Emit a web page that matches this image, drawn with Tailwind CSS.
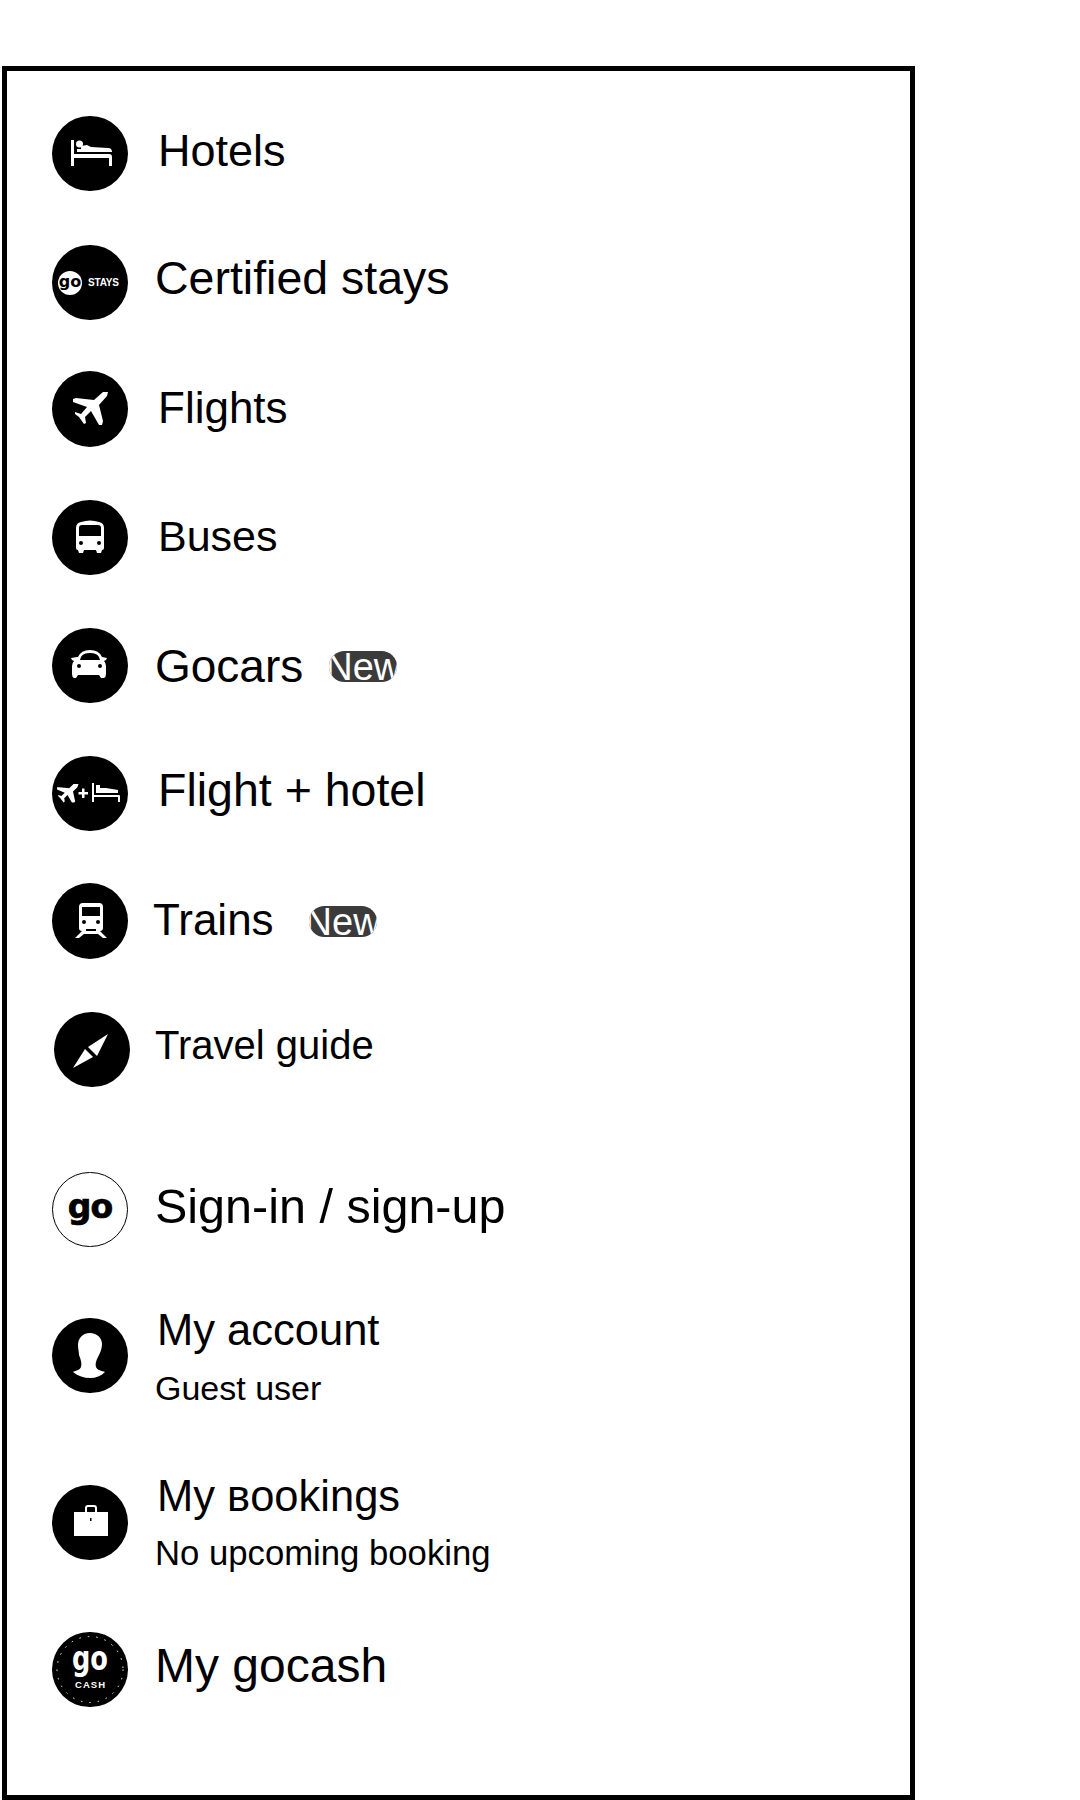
<!DOCTYPE html>
<html lang="en">
<head>
  <meta charset="UTF-8" />
  <meta name="viewport" content="width=device-width, initial-scale=1.0" />
  <title>Menu</title>
  <script src="https://cdn.jsdelivr.net/npm/@tailwindcss/browser@4"></script>
</head>
<body class="bg-white h-[1800px] overflow-hidden font-['Liberation_Sans',Arial,sans-serif] text-black">

  <!-- Side menu frame -->
  <div class="ml-[2px] mt-[66px] w-[913px] h-[1734px] border-[5px] border-black pl-[45px] pt-[45px] box-border">

    <!-- Hotels -->
    <a class="flex items-center h-[75px]">
      <span class="block w-[76px] h-[75px] rounded-full bg-black shrink-0">
        <svg viewBox="0 0 76 75" class="w-[76px] h-[75px]" fill="#fff">
          <path d="M19 24h3v14h35a3 3 0 0 1 3 3v9h-3v-8H22v8h-3z"/>
          <circle cx="27.5" cy="28" r="3.5"/>
          <path d="M25 36v-3h4v-3l6-1 4 2 17 1a4 4 0 0 1 4 4v0H25z"/>
        </svg>
      </span>
      <span class="ml-[30px] mb-[5px] text-[45px]">Hotels</span>
    </a>

    <!-- Certified stays -->
    <a class="flex items-center h-[75px] mt-[54px]">
      <span class="block w-[76px] h-[75px] rounded-full bg-black shrink-0">
        <svg viewBox="0 0 76 75" class="w-[76px] h-[75px]" fill="#fff">
          <circle cx="18" cy="38" r="12"/>
          <text x="18" y="42" text-anchor="middle" font-size="16" font-weight="700" fill="#000" class="font-['DejaVu_Sans']">go</text>
          <text x="36" y="41" font-size="10" font-weight="700" textLength="31" class="font-['Liberation_Sans']">STAYS</text>
        </svg>
      </span>
      <span class="ml-[27px] mb-[8px] text-[46.5px]">Certified stays</span>
    </a>

    <!-- Flights -->
    <a class="flex items-center h-[76px] mt-[51px]">
      <span class="block w-[76px] h-[76px] rounded-full bg-black shrink-0">
        <svg viewBox="0 0 76 76" class="w-[76px] h-[76px]" fill="#fff">
          <path d="M56 21l-1 4-8 9 4 16-1 4h-3L39 40l-6 6 1 6-2 1-5-7-4-3v-2l6 2 6-7-14-5v-3l3-1 18 2 9-8z"/>
        </svg>
      </span>
      <span class="ml-[30px] mb-[3px] text-[44px]">Flights</span>
    </a>

    <!-- Buses -->
    <a class="flex items-center h-[75px] mt-[53px]">
      <span class="block w-[76px] h-[75px] rounded-full bg-black shrink-0">
        <svg viewBox="0 0 76 75" class="w-[76px] h-[75px]" fill="#fff">
          <path fill-rule="evenodd" d="M24 28q0-5 5-6 9-3 18 0 5 1 5 6v20q0 2-2 2l-1 3h-4l-1-3H32l-1 3h-4l-1-3q-2 0-2-2zM27 28v8h22v-8q0-3-3-3H30q-3 0-3 3zM29 41a2 2 0 1 0 0 4 2 2 0 1 0 0-4zM47 41a2 2 0 1 0 0 4 2 2 0 1 0 0-4z"/>
        </svg>
      </span>
      <span class="ml-[30px] mb-[2px] text-[43px]">Buses</span>
    </a>

    <!-- Gocars -->
    <a class="flex items-center h-[75px] mt-[53px]">
      <span class="block w-[76px] h-[75px] rounded-full bg-black shrink-0">
        <svg viewBox="0 0 76 75" class="w-[76px] h-[75px]" fill="#fff">
          <path fill-rule="evenodd" d="M26 29q3-7 12-7t12 7l5 1-1 2-2 1q2 2 2 5v8q0 3-2 4h-3l-2-3H26l-2 3h-2q-2-1-2-4v-8q0-3 2-5l-2-1-1-2 6-1zM29 29q2-4 9-4t9 4l1 3H28zM27 36a2 2 0 1 0 0 4 2 2 0 1 0 0-4zM48 36a2 2 0 1 0 0 4 2 2 0 1 0 0-4z"/>
        </svg>
      </span>
      <span class="ml-[27px] mt-[1px] text-[46px]">Gocars</span>
      <span class="block ml-[26px] mt-[2px] w-[68px] h-[31px] rounded-full bg-[#3b3b3b] overflow-hidden text-white text-[38px] leading-[33px] flex justify-center shrink-0"><span class="shrink-0">New</span></span>
    </a>

    <!-- Flight + hotel -->
    <a class="flex items-center h-[75px] mt-[53px]">
      <span class="block w-[76px] h-[75px] rounded-full bg-black shrink-0">
        <svg viewBox="0 0 76 75" class="w-[76px] h-[75px]" fill="#fff">
          <g transform="translate(-1 -4) scale(1.1)">
            <path d="M25 29l-1 3-4 4 2 9-1 1h-2l-4-7-3 3 .5 3-1 1-3-4-2-2v-1l3 1 3-3-7-3v-2h2l9 1 4-4z"/>
          </g>
          <path d="M26.5 36h3.5v-3.500h2.500v3.500h3.500v2.500h-3.500v3.500h-2.500v-3.500h-3.500z"/>
          <path d="M40 27h2v12h25q1 0 1 1v6h-2v-5H42v5h-2z"/>
          <path d="M44 29h4v3l6 0 12 2v3H44z"/>
        </svg>
      </span>
      <span class="ml-[30px] mb-[5px] text-[46.500px]">Flight + hotel</span>
    </a>

    <!-- Trains -->
    <a class="flex items-center h-[76px] mt-[52px]">
      <span class="block w-[76px] h-[76px] rounded-full bg-black shrink-0">
        <svg viewBox="0 0 76 76" class="w-[76px] h-[76px]" fill="#fff">
          <path fill-rule="evenodd" d="M27 24q0-4 4-4h16q4 0 4 4v21q0 3-3 3l7 7h-4l-5-4H32l-5 4h-4l7-7q-3 0-3-3zM30 24v9h18v-9zM32 37a2 2 0 1 0 0 4 2 2 0 1 0 0-4zM46 37a2 2 0 1 0 0 4 2 2 0 1 0 0-4zM34 46v2h10v-2z"/>
        </svg>
      </span>
      <span class="ml-[25px] mb-[2px] text-[44px]">Trains</span>
      <span class="block ml-[35px] w-[68px] h-[31px] rounded-full bg-[#3b3b3b] overflow-hidden text-white text-[38px] leading-[33px] flex justify-center shrink-0"><span class="shrink-0">New</span></span>
    </a>

    <!-- Travel guide -->
    <a class="flex items-center h-[75px] mt-[53px]">
      <span class="block ml-[2px] w-[76px] h-[75px] rounded-full bg-black shrink-0">
        <svg viewBox="0 0 76 75" class="w-[76px] h-[75px]" fill="#fff">
          <path d="M54 22L34 35l9 9z"/>
          <path d="M19 56l20-11-8-8z"/>
        </svg>
      </span>
      <span class="ml-[25px] mb-[10px] text-[40px]">Travel guide</span>
    </a>

    <!-- Sign-in -->
    <a class="flex items-center h-[75px] mt-[85px]">
      <span class="flex items-center justify-center w-[76px] h-[75px] rounded-full border-[1.5px] border-black shrink-0 font-['DejaVu_Sans'] font-bold text-[33px] tracking-[-1px] leading-none pb-[6px] [-webkit-text-stroke:0.7px_black]">go</span>
      <span class="ml-[27px] mb-[6px] text-[48.500px]">Sign-in / sign-up</span>
    </a>

    <!-- My account -->
    <a class="flex items-center h-[75px] mt-[71px]">
      <span class="block w-[76px] h-[75px] rounded-full bg-black shrink-0">
        <svg viewBox="0 0 76 75" class="w-[76px] h-[75px]" fill="#fff">
          <path d="M38 15c-8 0-12 6-12 12 0 4 1 7 1 10 2 5 3 9 2 12-1 3-6 4-8 5 5 4 11 6 17 6s11-2 15-6c-3-1-8-2-9-5-1-3 0-6 2-10 2-4 4-8 4-13 0-6-5-11-12-11z"/>
        </svg>
      </span>
      <div class="ml-[27px] mt-[2px] flex flex-col">
        <span class="ml-[2px] text-[43.500px] leading-[50px]">My account</span>
        <span class="mt-[13px] text-[34px] leading-[40px]">Guest user</span>
      </div>
    </a>

    <!-- My bookings -->
    <a class="flex items-center h-[75px] mt-[92px]">
      <span class="block w-[76px] h-[75px] rounded-full bg-black shrink-0">
        <svg viewBox="0 0 76 75" class="w-[76px] h-[75px]" fill="#fff">
          <path fill-rule="evenodd" d="M22 27h11v-4q0-3 3-3h6q3 0 3 3v4h11v24H22zM35 23v4h8v-4q0-1-1-1h-6q-1 0-1 1z"/>
          <rect x="38" y="33" width="1.500" height="3" fill="#000"/>
        </svg>
      </span>
      <div class="ml-[27px] mb-[1px] flex flex-col">
        <span class="ml-[2px] text-[43.500px] leading-[50px]">My ʙookings</span>
        <span class="mt-[11.500px] text-[34.700px] leading-[40px]">No upcoming booking</span>
      </div>
    </a>

    <!-- My gocash -->
    <a class="flex items-center h-[75px] mt-[72px]">
      <span class="block w-[76px] h-[75px] rounded-full bg-black shrink-0">
        <svg viewBox="0 0 76 75" class="w-[76px] h-[75px]" fill="#fff">
          <circle cx="38" cy="37.500" r="33" fill="none" stroke="#fff" stroke-width="1" stroke-dasharray="1.500 7"/>
          <text x="38" y="38" text-anchor="middle" font-size="33" font-weight="700" textLength="36" lengthAdjust="spacingAndGlyphs" class="font-['DejaVu_Sans']">go</text>
          <text x="23" y="56" font-size="9.500" font-weight="700" textLength="30" class="font-['Liberation_Sans']">CASH</text>
        </svg>
      </span>
      <span class="ml-[27px] mb-[6.500px] text-[48px]">My gocash</span>
    </a>

  </div>
</body>
</html>
